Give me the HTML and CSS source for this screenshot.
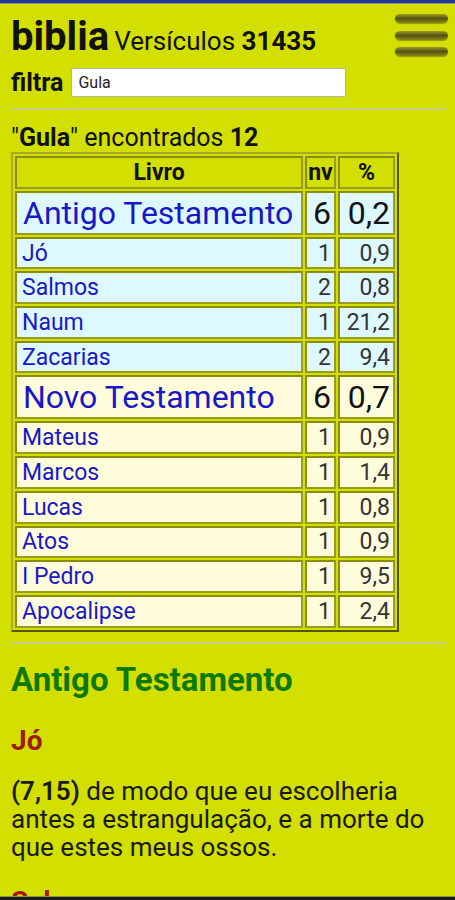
FILE: index.html
```html
<!DOCTYPE html>
<html lang="pt">
<head>
  <meta charset="UTF-8" />
  <meta name="viewport" content="width=device-width, initial-scale=1.0"/>
  <title>biblia</title>
  <link rel="stylesheet" href="styles.css">
</head>
<body>
  <div class="topbar"></div>
  <div class="page">
    <div class="header">
      <div class="title-line">
        <span class="app-name">biblia</span>
        <span class="count">Versículos <b>31435</b></span>
      </div>
      <div class="menu">
        <span></span><span></span><span></span>
      </div>
    </div>

    <div class="filter">
      <label for="filterInput">filtra</label>
      <input type="text" id="filterInput" value="Gula">
    </div>

    <hr>

    <p class="found">"<b>Gula</b>" encontrados <b>12</b></p>

    <table class="results">
      <colgroup>
        <col class="col-book"><col class="col-nv"><col class="col-pct">
      </colgroup>
      <tr>
        <th>Livro</th>
        <th>nv</th>
        <th>%</th>
      </tr>
      <tr class="at big">
        <td class="book">Antigo Testamento</td><td>6</td><td>0,2</td>
      </tr>
      <tr class="at"><td class="book">Jó</td><td>1</td><td>0,9</td></tr>
      <tr class="at"><td class="book">Salmos</td><td>2</td><td>0,8</td></tr>
      <tr class="at"><td class="book">Naum</td><td>1</td><td>21,2</td></tr>
      <tr class="at"><td class="book">Zacarias</td><td>2</td><td>9,4</td></tr>
      <tr class="nt big">
        <td class="book">Novo Testamento</td><td>6</td><td>0,7</td>
      </tr>
      <tr class="nt"><td class="book">Mateus</td><td>1</td><td>0,9</td></tr>
      <tr class="nt"><td class="book">Marcos</td><td>1</td><td>1,4</td></tr>
      <tr class="nt"><td class="book">Lucas</td><td>1</td><td>0,8</td></tr>
      <tr class="nt"><td class="book">Atos</td><td>1</td><td>0,9</td></tr>
      <tr class="nt"><td class="book">I Pedro</td><td>1</td><td>9,5</td></tr>
      <tr class="nt"><td class="book">Apocalipse</td><td>1</td><td>2,4</td></tr>
    </table>

    <hr class="sep">

    <h2>Antigo Testamento</h2>
    <h3>Jó</h3>
    <p class="verse"><b>(7,15)</b> de modo que eu escolheria antes a estrangulação, e a morte do que estes meus ossos.</p>
    <h3 class="next">Salmos</h3>
  </div>
  <div class="navbar"></div>
</body>
</html>
```

FILE: styles.css
```css
* {
  box-sizing: border-box;
}

body {
  margin: 0;
  padding: 0;
  background: #d3df00;
  font-family: Roboto, "Noto Sans", sans-serif;
  color: #111;
}

.topbar {
  height: 4px;
  background: #27379a;
  border-bottom: 1px solid #8d9570;
}

.page {
  padding: 0 10px 0 11px;
}

.header {
  display: flex;
  justify-content: space-between;
  align-items: flex-start;
}

.title-line {
  padding-top: 13px;
  line-height: 40px;
  white-space: nowrap;
}

.app-name {
  font-size: 40px;
  font-weight: bold;
}

.count {
  font-size: 26px;
  line-height: 26px;
  margin-left: 1px;
}

.menu {
  display: flex;
  flex-direction: column;
  gap: 7.5px;
  margin: 10px -3px 0 0;
  width: 53px;
}

.menu span {
  display: block;
  height: 9px;
  border-radius: 5px / 4.5px;
  background: linear-gradient(#9a9a2c, #55550f 50%, #86861e);
  box-shadow: 0 1px 1px #8f9a00;
}

.filter {
  display: flex;
  align-items: center;
  gap: 8px;
  margin-top: 3px;
}

.filter label {
  font-size: 25px;
  line-height: 29px;
  font-weight: bold;
}

.filter input {
  width: 275px;
  height: 29px;
  padding: 2px 6px;
  font-family: Roboto, sans-serif;
  font-size: 16px;
  color: #222;
  border: 1px solid #b5b59a;
  border-radius: 2px;
  background: #fff;
}

hr {
  border: none;
  height: 2px;
  background: #c9cc88;
  margin: 11px 0 0;
}

.found {
  font-size: 25px;
  line-height: 28px;
  margin: 14px 0 0;
}

.results {
  table-layout: fixed;
  width: 386px;
  border: 2px outset #a9a92a;
  border-spacing: 2px;
  background: #d3df00;
  font-size: 23px;
}

.col-book {
  width: 288px;
}

.col-nv {
  width: 31px;
}

.col-pct {
  width: 57px;
}

.results th,
.results td {
  border: 2px solid #9a9c1e;
  border-top-color: #8b8d12;
  border-left-color: #8b8d12;
  padding: 0 3px 0 2px;
  height: 32.7px;
  text-align: right;
  color: #333;
  white-space: nowrap;
}

.results th {
  text-align: center;
  font-weight: bold;
  color: #111;
  padding: 0;
}

.results td.book {
  text-align: left;
  color: #1818c8;
  padding-left: 5px;
}

.at td {
  background: #def8ff;
}

.nt td {
  background: #fffcdc;
}

.big td {
  font-size: 32px;
  height: 44px;
  color: #111;
}

.big td.book {
  padding-left: 6px;
}

.sep {
  margin-top: 10px;
}

h2 {
  color: #0b7a0b;
  font-size: 33px;
  line-height: 38px;
  margin: 17px 0 0;
}

h3 {
  color: #a01a0a;
  font-size: 28px;
  line-height: 33px;
  margin: 25px 0 0;
}

.verse {
  font-size: 26px;
  line-height: 28px;
  margin: 20px 0 0;
  color: #1a1a1a;
}

.verse b {
  font-weight: 600;
}

h3.next {
  margin-top: 24px;
}

.navbar {
  position: fixed;
  left: 0;
  right: 0;
  bottom: 0;
  height: 4px;
  background: #1a1a1a;
  border-top: 1px solid #8c9650;
}
```
